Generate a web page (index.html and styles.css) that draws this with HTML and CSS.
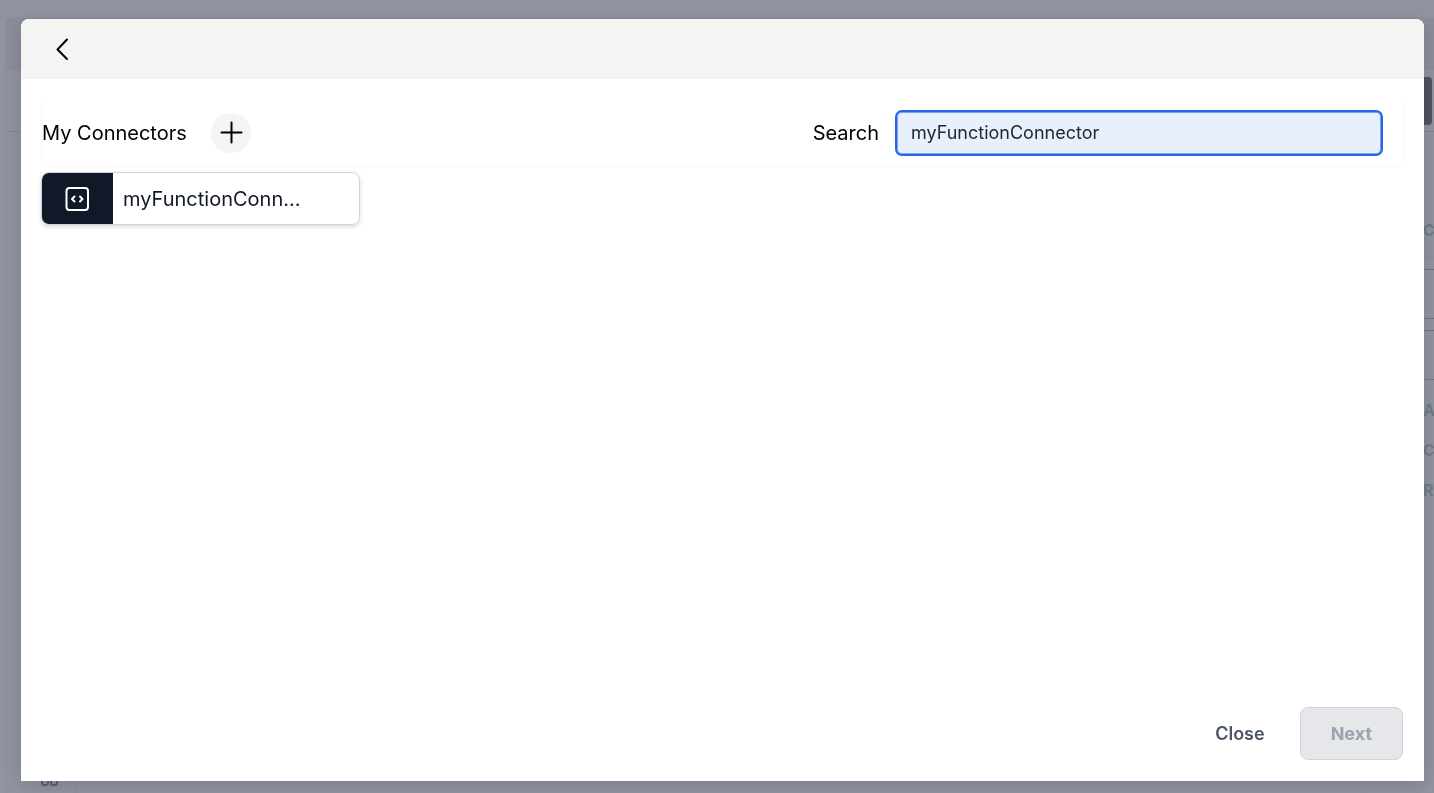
FILE: index.html
```html
<!DOCTYPE html>
<html lang="en">
<head>
<meta charset="utf-8">
<title>My Connectors</title>
<meta name="viewport" content="width=device-width, initial-scale=1">
<link rel="stylesheet" href="styles.css">
</head>
<body>
<div class="page" aria-hidden="true">
  <div class="page-top"></div>
  <div class="page-frame">
    <div class="page-title"></div>
    <div class="page-tools"><span class="page-action"></span></div>
    <div class="page-main">
      <div class="page-rail">
        <svg width="18" height="12" viewBox="0 0 18 12" fill="none" stroke="#5c616d" stroke-width="2"><rect x="1" y="1" width="6" height="9" rx="2"/><rect x="10" y="1" width="6" height="9" rx="2"/></svg>
      </div>
      <div class="page-side">
        <div class="side-heading">C</div>
        <div class="side-field"></div>
        <div class="side-field"></div>
        <div class="side-item">A</div>
        <div class="side-item">C</div>
        <div class="side-item">R</div>
      </div>
    </div>
  </div>
</div>

<div class="modal" role="dialog" aria-modal="true" aria-label="My Connectors">
  <header class="modal-header">
    <button class="round-button back" type="button" aria-label="Back">
      <svg width="40" height="40" viewBox="0 0 40 40" fill="none" stroke="#000" stroke-width="2" stroke-linecap="round" stroke-linejoin="round"><path d="M26 10.500 16.500 20.500 26 30"/></svg>
    </button>
  </header>
  <main class="modal-body">
    <div class="toolbar">
      <h1 class="title">My Connectors</h1>
      <button class="round-button add" type="button" aria-label="Add connector">
        <svg width="40" height="40" viewBox="0 0 40 40" fill="none" stroke="#000" stroke-width="2" stroke-linecap="round"><path d="M20.500 9.500v20M10.500 19.500h20"/></svg>
      </button>
      <label class="search-label" for="search">Search</label>
      <input class="search" id="search" type="text" value="myFunctionConnector" spellcheck="false" autocomplete="off" autofocus>
    </div>
    <div class="cards">
      <button class="card" type="button">
        <span class="card-icon">
          <svg width="26" height="26" viewBox="0 0 26 26" fill="none" stroke="#fff" stroke-width="2" stroke-linecap="round" stroke-linejoin="round"><rect x="1.500" y="2" width="21.500" height="22" rx="3"/><path d="M9.500 10.500 7 13l2.500 2.500M15 10.500l2.500 2.500-2.500 2.500"/></svg>
        </span>
        <span class="card-name">myFunctionConn...</span>
      </button>
    </div>
  </main>
  <footer class="modal-footer">
    <button class="close" type="button">Close</button>
    <button class="next" type="button" disabled>Next</button>
  </footer>
</div>
<script src="script.js"></script>
</body>
</html>
```

FILE: styles.css
```css
* {
  box-sizing: border-box;
}

body {
  margin: 0;
  height: 100vh;
  overflow: hidden;
  background: #9095a0;
  color: #000;
  font-family: Inter, "Liberation Sans", sans-serif;
  font-size: 20px;
  line-height: 28px;
}

button,
input {
  font: inherit;
}

/* Page under the dialog */
.page {
  display: flex;
  flex-direction: column;
  height: 100%;
}

.page-top {
  height: 18px;
  border-bottom: 1px solid #8c919d;
}

.page-frame {
  flex: 1;
  display: flex;
  flex-direction: column;
  min-height: 0;
  margin-left: 5px;
  border-left: 1px solid #8a8f9b;
}

.page-title {
  height: 52px;
  background: #8c8e9d;
}

.page-tools {
  display: flex;
  justify-content: flex-end;
  height: 62px;
  padding: 7px 2px;
  border-bottom: 1px solid #828793;
}

.page-action {
  width: 120px;
  height: 48px;
  border-radius: 4px;
  background: #50545f;
}

.page-main {
  flex: 1;
  display: flex;
  justify-content: space-between;
  min-height: 0;
}

.page-rail {
  display: flex;
  align-items: flex-end;
  width: 71px;
  padding: 0 0 6px 35px;
  border-right: 1px solid #8a8f9b;
}

.page-side {
  width: 69px;
  border-left: 1px solid #8b909c;
  color: #757a87;
  font-size: 16px;
  font-weight: 700;
  line-height: 20px;
}

.side-heading {
  height: 126px;
  padding: 88px 0 0 57px;
  border-bottom: 1px solid #868b97;
}

.side-field {
  height: 50px;
  margin-top: 11px;
  border: 1px solid #717683;
  border-width: 1px 0;
}

.side-item {
  padding: 20px 0 0 57px;
}

/* Dialog */
.modal {
  position: fixed;
  inset: 19px 10px 12px 21px;
  display: flex;
  flex-direction: column;
  overflow: hidden;
  border-radius: 8px 8px 0 0;
  background: #fff;
  box-shadow: 0 4px 20px rgba(17, 24, 39, 0.18);
}

.modal-header {
  display: flex;
  align-items: center;
  height: 60px;
  padding: 0 20px;
  background: #f4f4f2;
}

.round-button {
  display: flex;
  width: 40px;
  height: 40px;
  padding: 0;
  border: 0;
  border-radius: 50%;
  background: #f3f4f6;
}

.modal-body {
  flex: 1;
  padding: 20px;
}

.toolbar {
  display: flex;
  align-items: center;
  height: 68px;
  padding-right: 20px;
  border: 1px solid #f9f9f9;
  border-top-color: #fefefe;
  border-radius: 8px;
}

.title {
  margin: 0;
  font-size: 20px;
  font-weight: 400;
}

.add {
  margin-left: 24px;
}

.search-label {
  margin-left: auto;
}

.search {
  width: 488px;
  height: 46px;
  margin-left: 16px;
  padding: 0 14px 1px;
  border: 2px solid #2563eb;
  border-radius: 7px;
  outline: 0;
  background: #e8f0fe;
  box-shadow: inset 0 0 0 1px #7ba1f4;
  color: #25282e;
  font-size: 18px;
}

.cards {
  display: grid;
  grid-template-columns: repeat(auto-fill, 319px);
  margin-top: 5px;
}

.card {
  display: flex;
  height: 53px;
  padding: 0;
  overflow: hidden;
  border: 1px solid #d1d5db;
  border-radius: 8px;
  background: #fff;
  box-shadow: 0 2px 5px rgba(0, 0, 0, 0.14);
  color: #111827;
  text-align: left;
}

.card-icon {
  display: flex;
  align-items: center;
  justify-content: center;
  width: 71px;
  height: 100%;
  background: #111827;
}

.card-name {
  padding: 12px 10px;
}

.modal-footer {
  display: flex;
  align-items: center;
  justify-content: flex-end;
  gap: 15px;
  padding: 0 21px 21px;
}

.close,
.next {
  height: 53px;
  border-radius: 8px;
  font-size: 18px;
}

.close {
  padding: 0 20px;
  border: 0;
  background: transparent;
  color: #4b5563;
  font-weight: 600;
}

.next {
  padding: 0 30px;
  border: 1px solid #d1d5db;
  background: #e5e7eb;
  color: #9ca3af;
  font-weight: 700;
}
```

FILE: script.js
```js
const search = document.getElementById("search");
search.focus();
search.setSelectionRange(search.value.length, search.value.length);
```
